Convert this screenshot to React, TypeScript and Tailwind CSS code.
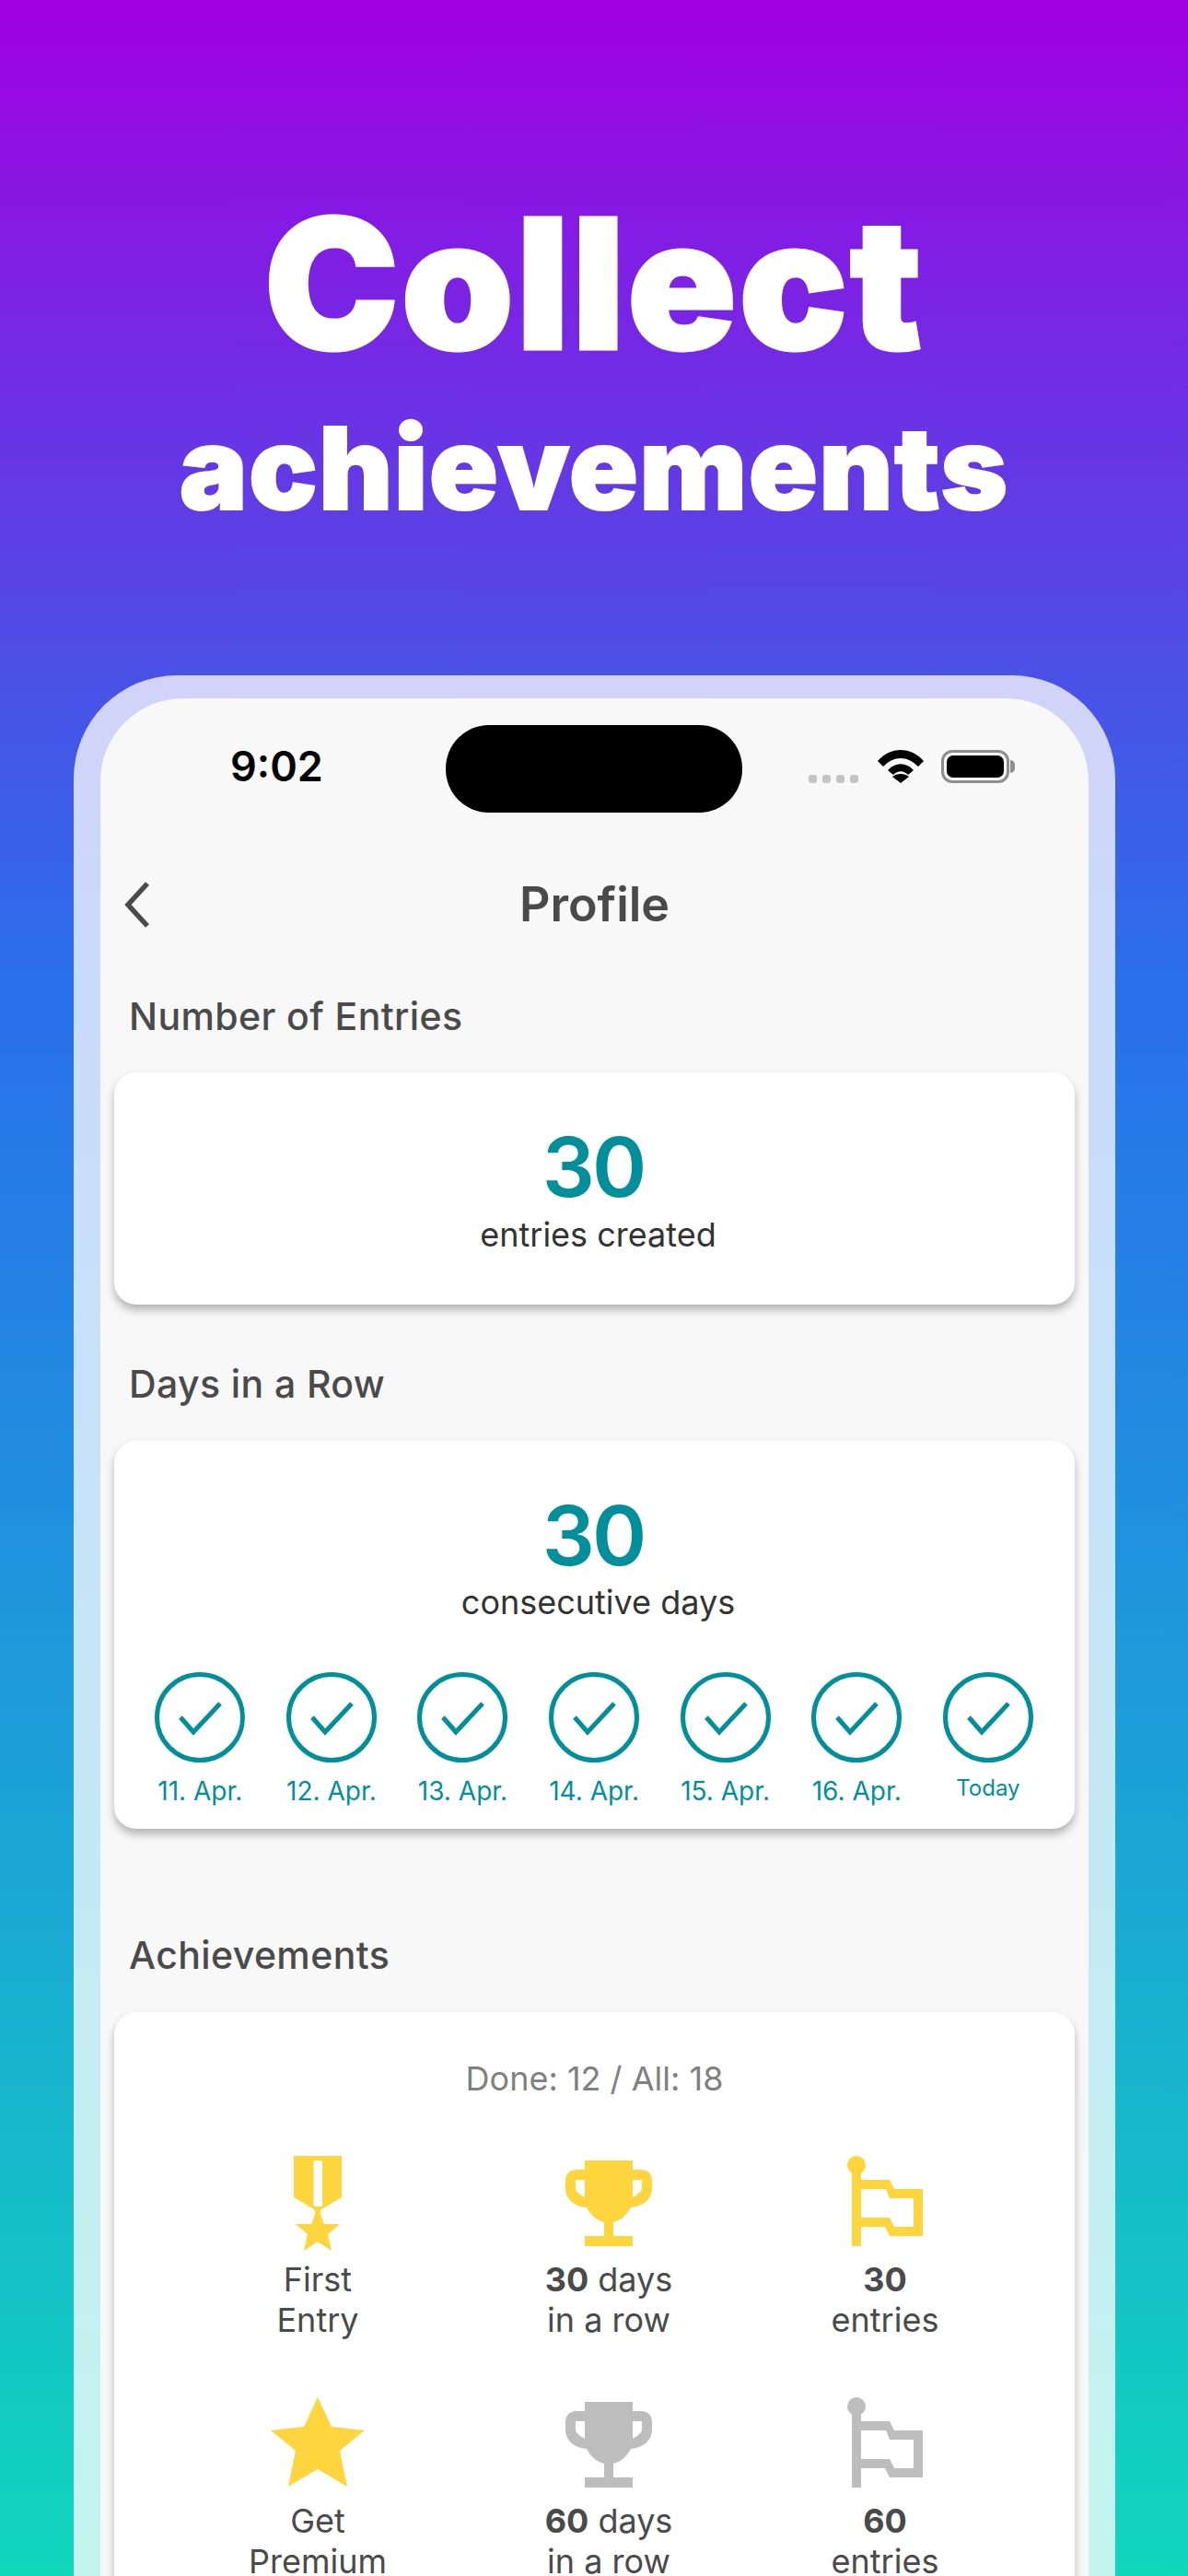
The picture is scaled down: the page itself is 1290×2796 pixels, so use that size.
const teal = "#008f9b";

function Chevron() {
  return (
    <svg width="30" height="52" viewBox="0 0 30 52" className="absolute left-[25px] top-[198px]">
      <path d="M26 3 L5 26 L26 49" fill="none" stroke="#4a4a4a" strokeWidth="5.5" />
    </svg>
  );
}

function Medal() {
  return (
    <svg width="52" height="103" viewBox="0 0 52 103">
      <path
        fill="#ffd53e"
        d="M0 0 H52 V45 L30 58 L28.5 62 L33 74 H50 L37 85 L41 103 L26 93 L11 103 L15 85 L2 74 H19 L23.5 62 L22 58 L0 45 Z"
      />
      <rect x="21.5" y="5" width="9.5" height="50" rx="2.5" fill="#fff" />
    </svg>
  );
}

function Trophy({ color }: { color: string }) {
  return (
    <svg width="94" height="98" viewBox="0 -5 94 98">
      <path
        fill={color}
        d="M21 0 H73 V10 H82 C90 10 94 15 94 22 V30 C94 42 84 50 71 51 C66 60 60 65 52 67 V82 H73 V93 H21 V82 H42 V67 C34 65 28 60 23 51 C10 50 0 42 0 30 V22 C0 15 4 10 12 10 H21 Z M11 21 V30 C11 33 15 37 21 40 V21 Z M83 21 H73 V40 C79 37 83 33 83 30 Z"
        fillRule="evenodd"
      />
    </svg>
  );
}

function Flag({ color }: { color: string }) {
  return (
    <svg width="82" height="98" viewBox="0 0 82 98">
      <circle cx="10" cy="10" r="10" fill={color} />
      <path
        fill={color}
        fillRule="evenodd"
        d="M5 15 H15 V26 H46 L51 36 H82 V87 H46 L41 77 H15 V98 H5 Z M15 36 V67 H46 L51 77 H72 V46 H46 L42 36 Z"
      />
    </svg>
  );
}

function Star() {
  return (
    <svg width="102" height="98" viewBox="0 0 102 98">
      <path fill="#ffd53e" d="M51 0 L66 32 L102 36 L75 58 L83 97 L51 78 L19 97 L27 58 L0 36 L36 32 Z" />
    </svg>
  );
}

function Day({ label, small }: { label: string; small?: boolean }) {
  return (
    <div className="flex w-[142.6px] flex-col items-center">
      <svg width="98" height="98" viewBox="0 0 98 98">
        <circle cx="49" cy="49" r="46.5" fill="none" stroke={teal} strokeWidth="5" />
        <path d="M28 49 L42 65 L71 34" fill="none" stroke={teal} strokeWidth="5" />
      </svg>
      <div className={small ? "mt-[10px] text-[24px] leading-[36px] text-[#008f9b]" : "mt-[13px] text-[28px] leading-[36px] text-[#008f9b]"}>
        {label}
      </div>
    </div>
  );
}

function Achievement({ icon, top, bottom }: { icon: React.ReactNode; top: React.ReactNode; bottom: string }) {
  return (
    <div className="flex flex-col items-center">
      <div className="flex h-[103px] items-start">{icon}</div>
      <div className="mt-[9px] text-center text-[36px] leading-[44px] text-[#4a4a4a]">
        <div>{top}</div>
        <div>{bottom}</div>
      </div>
    </div>
  );
}

export default function App() {
  const days = ["11. Apr.", "12. Apr.", "13. Apr.", "14. Apr.", "15. Apr.", "16. Apr."];
  return (
    <div className="h-[2796px] w-[1290px] overflow-hidden bg-[linear-gradient(180deg,#a100e2_0%,#4b50e6_26%,#2a6fec_38%,#1c9fd8_68%,#10d6bc_100%)] font-['Inter',sans-serif]">
      <div className="pt-[208px] text-center text-white">
        <h1 className="text-[196px] leading-[200px] font-black tracking-[2.3px] [-webkit-text-stroke:3px_white]">Collect</h1>
        <h2 className="mt-[30px] text-[124px] leading-[140px] font-black tracking-[1.3px] [-webkit-text-stroke:2px_white]">achievements</h2>
      </div>

      <div className="mt-[155px] ml-[80px] h-[2100px] w-[1131px] rounded-t-[112px] bg-white/75 px-[29px] pt-[25px]">
        <div className="relative h-full rounded-t-[90px] bg-[#f8f8f8]">
          <div className="absolute left-[141px] top-[46px] text-[45px] leading-[56px] font-semibold text-black">9:02</div>
          <div className="absolute left-[375px] top-[29px] h-[95px] w-[322px] rounded-[47px] bg-black" />
          <div className="absolute left-[769px] top-[83px] flex gap-[6px]">
            <span className="h-[9px] w-[9px] rounded-[3px] bg-[#c4c4c4]" />
            <span className="h-[9px] w-[9px] rounded-[3px] bg-[#c4c4c4]" />
            <span className="h-[9px] w-[9px] rounded-[3px] bg-[#c4c4c4]" />
            <span className="h-[9px] w-[9px] rounded-[3px] bg-[#c4c4c4]" />
          </div>
          <svg width="50" height="36" viewBox="0 0 50 36" className="absolute left-[844px] top-[56px]">
            <path d="M0 12 C14 -4 36 -4 50 12 L44 18 C32 6 18 6 6 18 Z M11 22 C19 13 31 13 39 22 L33 27 C28 22 22 22 17 27 Z M25 36 L16 29 C21 25 29 25 34 29 Z" fill="#000" />
          </svg>
          <div className="absolute left-[913px] top-[56px] h-[36px] w-[74px] rounded-[12px] border-[3px] border-[#8e8e8e] p-[3px]">
            <div className="h-full w-full rounded-[7px] bg-black" />
          </div>
          <div className="absolute left-[988px] top-[67px] h-[14px] w-[5px] rounded-r-full bg-[#8e8e8e]" />

          <Chevron />
          <div className="pt-[194px] text-center text-[52px] leading-[60px] font-semibold text-[#4a4a4a]">Profile</div>

          <div className="mt-[67px] pl-[31px] text-[41px] leading-[48px] font-medium tracking-[0.4px] text-[#4a4a4a]">Number of Entries</div>
          <div className="mx-[15px] mt-[37px] h-[252px] rounded-[24px] bg-white pt-[53px] text-center shadow-[0_6px_10px_rgba(0,0,0,0.28)]">
            <div className="pr-[3px] text-[90px] leading-[100px] font-semibold tracking-[-3px] text-[#008f9b]">30</div>
            <div className="mt-[1px] pl-[8px] text-[36px] leading-[44px] text-[#333]">entries created</div>
          </div>

          <div className="mt-[62px] pl-[31px] text-[41px] leading-[48px] font-medium tracking-[0.4px] text-[#4a4a4a]">Days in a Row</div>
          <div className="mx-[15px] mt-[38px] h-[421px] rounded-[24px] bg-white pt-[53px] text-center shadow-[0_6px_10px_rgba(0,0,0,0.28)]">
            <div className="pr-[3px] text-[90px] leading-[100px] font-semibold tracking-[-3px] text-[#008f9b]">30</div>
            <div className="pl-[8px] text-[36px] leading-[44px] text-[#333]">consecutive days</div>
            <div className="mt-[54px] ml-[22px] flex">
              {days.map((d) => (
                <Day key={d} label={d} />
              ))}
              <Day label="Today" small />
            </div>
          </div>

          <div className="mt-[113px] pl-[31px] text-[41px] leading-[48px] font-medium tracking-[0.4px] text-[#4a4a4a]">Achievements</div>
          <div className="mx-[15px] mt-[38px] h-[800px] rounded-[24px] bg-white pt-[50px] shadow-[0_6px_10px_rgba(0,0,0,0.28)]">
            <div className="text-center text-[36px] leading-[44px] text-[#808080]">Done: 12 / All: 18</div>
            <div className="mt-[62px] ml-[63px] grid grid-cols-[316px_316px_284px] gap-y-[62px]">
              <Achievement icon={<Medal />} top="First" bottom="Entry" />
              <Achievement icon={<Trophy color="#ffd53e" />} top={<><b className="font-bold">30</b> days</>} bottom="in a row" />
              <Achievement icon={<Flag color="#ffd53e" />} top={<b className="font-bold">30</b>} bottom="entries" />
              <Achievement icon={<Star />} top="Get" bottom="Premium" />
              <Achievement icon={<Trophy color="#bdbdbd" />} top={<><b className="font-bold">60</b> days</>} bottom="in a row" />
              <Achievement icon={<Flag color="#bdbdbd" />} top={<b className="font-bold">60</b>} bottom="entries" />
            </div>
          </div>
        </div>
      </div>
    </div>
  );
}
